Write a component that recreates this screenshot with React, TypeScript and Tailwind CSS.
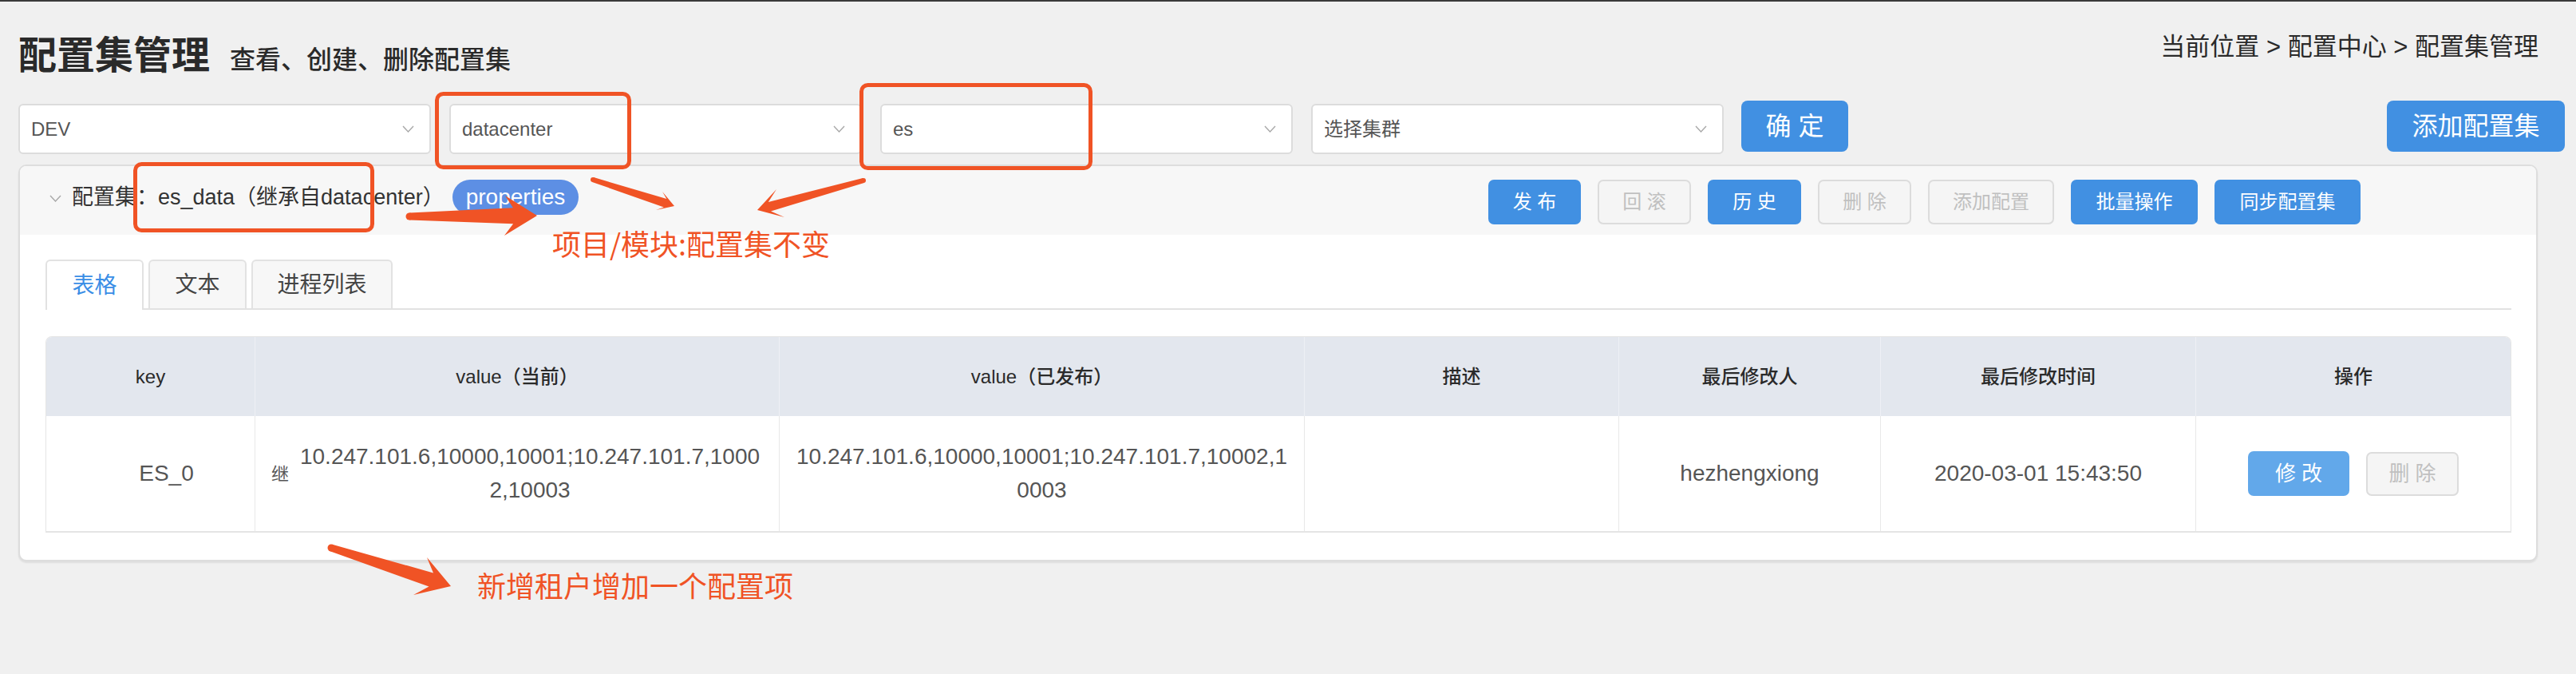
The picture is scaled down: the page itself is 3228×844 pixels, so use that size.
import React from "react";

type P = [number, number];

const RED = "#f05325";

// tapered annotation arrow (tail -> tip) with swept-back barbs
const arrowPoints = (
  tail: P,
  tip: P,
  barbA: P,
  barbB: P,
  tailW: number,
  neckW: number,
  neckBack: number
) => {
  const dx = tip[0] - tail[0];
  const dy = tip[1] - tail[1];
  const len = Math.hypot(dx, dy);
  const d = [dx / len, dy / len];
  let n = [-d[1], d[0]];
  const c = [tip[0] - d[0] * neckBack, tip[1] - d[1] * neckBack];
  if ((barbA[0] - c[0]) * n[0] + (barbA[1] - c[1]) * n[1] < 0) n = [-n[0], -n[1]];
  const pts = [
    [tail[0] + (n[0] * tailW) / 2, tail[1] + (n[1] * tailW) / 2],
    [c[0] + (n[0] * neckW) / 2, c[1] + (n[1] * neckW) / 2],
    barbA,
    tip,
    barbB,
    [c[0] - (n[0] * neckW) / 2, c[1] - (n[1] * neckW) / 2],
    [tail[0] - (n[0] * tailW) / 2, tail[1] - (n[1] * tailW) / 2],
  ];
  return pts.map((p) => p.map((v) => v.toFixed(1)).join(",")).join(" ");
};

const arrows = [
  { tail: [513, 271] as P, tip: [673, 270] as P, a: [633, 245] as P, b: [632, 295] as P, tw: 9, nw: 20, nb: 30 },
  { tail: [743, 225] as P, tip: [845, 258] as P, a: [830, 240] as P, b: [822, 263] as P, tw: 6, nw: 11, nb: 12 },
  { tail: [1082, 226] as P, tip: [949, 263] as P, a: [973, 237] as P, b: [983, 272] as P, tw: 6, nw: 12, nb: 16 },
  { tail: [415, 686] as P, tip: [565, 734] as P, a: [535, 698] as P, b: [518, 745] as P, tw: 9, nw: 18, nb: 26 },
];

const boxes = [
  { x: 547.5, y: 117.5, w: 241, h: 92 },
  { x: 1079.5, y: 106.5, w: 287, h: 104 },
  { x: 169.5, y: 205.5, w: 297, h: 83 },
];

const Chevron = ({ className = "" }: { className?: string }) => (
  <svg width="15" height="9" viewBox="0 0 15 9" className={className}>
    <polyline points="1,1 7.5,8 14,1" fill="none" stroke="#a8a8a8" strokeWidth="1.4" />
  </svg>
);

function Select({ value }: { value: string }) {
  return (
    <div className="mt-[4px] w-[517px] h-[63px] flex-none flex items-center justify-between pl-[14px] pr-[19px] bg-white border-2 border-[#dcdcdc] rounded-[6px]">
      <span className="text-[24px] text-[#555]">{value}</span>
      <Chevron />
    </div>
  );
}

const headerButtons = [
  { label: "发 布", w: "w-[116px]", on: true },
  { label: "回 滚", w: "w-[117px]", on: false },
  { label: "历 史", w: "w-[117px]", on: true },
  { label: "删 除", w: "w-[117px]", on: false },
  { label: "添加配置", w: "w-[158px]", on: false },
  { label: "批量操作", w: "w-[159px]", on: true },
  { label: "同步配置集", w: "w-[183px]", on: true },
];

const columns = ["key", "value（当前）", "value（已发布）", "描述", "最后修改人", "最后修改时间", "操作"];

export default function App() {
  return (
    <div className="relative w-[3228px] h-[844px] overflow-hidden bg-[#f0f0f0] font-['Liberation_Sans','Noto_Sans_CJK_SC',sans-serif] text-[#333]">
      <div className="h-[2px] bg-[#3a3a3a]" />

      {/* title + breadcrumb */}
      <div className="flex justify-between items-start pl-[23px] pr-[47px]">
        <div className="mt-[40px] flex items-baseline text-[#2a2a2a]">
          <h1 className="text-[48px] leading-[56px] font-semibold">配置集管理</h1>
          <span className="ml-[25px] text-[32px] leading-[40px] font-medium">查看、创建、删除配置集</span>
        </div>
        <div className="mt-[37px] text-[31px] leading-[40px] text-[#2a2a2a]">
          当前位置 &gt; 配置中心 &gt; 配置集管理
        </div>
      </div>

      {/* filters */}
      <div className="mt-[28px] flex items-start pl-[23px] pr-[14px] gap-[23px]">
        <Select value="DEV" />
        <Select value="datacenter" />
        <Select value="es" />
        <Select value="选择集群" />
        <button className="-ml-[1px] w-[134px] h-[64px] flex-none rounded-[8px] bg-[#4190e2] text-white text-[32px]">
          确 定
        </button>
        <div className="flex-1" />
        <button className="w-[223px] h-[64px] flex-none rounded-[8px] bg-[#4190e2] text-white text-[32px]">
          添加配置集
        </button>
      </div>

      {/* config set panel */}
      <div className="mt-[13px] ml-[23px] w-[3157px] h-[497px] bg-white border-2 border-[#dddddd] rounded-[10px] overflow-hidden shadow-[0_2px_2px_rgba(0,0,0,0.08)]">
        <div className="h-[86px] bg-[#f7f7f7] flex items-start pl-[37px]">
          <div className="w-[1803px] flex-none flex items-center mt-[17px] h-[44px]">
            <Chevron className="mr-[13px] mt-[2px]" />
            <span className="text-[27px] text-[#333]">配置集：es_data（继承自datacenter）</span>
            <span className="ml-[10px] h-[44px] px-[17px] flex items-center rounded-full bg-[#5d8fe4] text-white text-[28px]">
              properties
            </span>
          </div>
          <div className="mt-[17px] flex gap-[21px]">
            {headerButtons.map((b) => (
              <button
                key={b.label}
                className={`${b.w} h-[56px] rounded-[7px] text-[24px] ${
                  b.on
                    ? "bg-[#4190e2] text-white"
                    : "bg-[#f5f5f5] border-2 border-[#dcdcdc] text-[#c0c0c0]"
                }`}
              >
                {b.label}
              </button>
            ))}
          </div>
        </div>

        <div className="pt-[31px] pl-[32px] pr-[31px]">
          {/* tabs */}
          <div className="flex items-end gap-[6px] border-b-2 border-[#e2e2e2] h-[63px]">
            <div className="-mb-[2px] w-[123px] h-[63px] flex items-center justify-center bg-white border-2 border-b-0 border-[#e2e2e2] rounded-t-[6px] text-[28px] text-[#3a8ee6]">
              表格
            </div>
            <div className="w-[123px] h-[61px] flex items-center justify-center bg-[#f7f7f7] border-2 border-b-0 border-[#e2e2e2] rounded-t-[6px] text-[28px] text-[#444]">
              文本
            </div>
            <div className="w-[177px] h-[61px] flex items-center justify-center bg-[#f7f7f7] border-2 border-b-0 border-[#e2e2e2] rounded-t-[6px] text-[28px] text-[#444]">
              进程列表
            </div>
          </div>

          {/* table */}
          <div className="mt-[33px] border border-b-2 border-[#e5e5e5] rounded-t-[8px] overflow-hidden">
            <div className="grid grid-cols-[261px_657px_658px_394px_328px_395px_395px] h-[99px] bg-[#e3e7ee]">
              {columns.map((c, i) => (
                <div
                  key={c}
                  className={`flex items-center justify-center text-[24px] font-medium text-[#2a2a2a] ${
                    i > 0 ? "border-l border-[#eef0f5]" : ""
                  }`}
                >
                  {c}
                </div>
              ))}
            </div>
            <div className="grid grid-cols-[261px_657px_658px_394px_328px_395px_395px] h-[144px] text-[28px] text-[#555]">
              <div className="flex items-center justify-center pl-[40px]">ES_0</div>
              <div className="border-l border-[#e8e8e8] flex items-center px-[20px] gap-[10px]">
                <span className="text-[22px] text-[#555]">继</span>
                <div className="flex-1 text-center break-all leading-[42px]">
                  10.247.101.6,10000,10001;10.247.101.7,10002,10003
                </div>
              </div>
              <div className="border-l border-[#e8e8e8] flex items-center px-[18px]">
                <div className="w-full text-center break-all leading-[42px]">
                  10.247.101.6,10000,10001;10.247.101.7,10002,10003
                </div>
              </div>
              <div className="border-l border-[#e8e8e8]" />
              <div className="border-l border-[#e8e8e8] flex items-center justify-center">hezhengxiong</div>
              <div className="border-l border-[#e8e8e8] flex items-center justify-center">2020-03-01 15:43:50</div>
              <div className="border-l border-[#e8e8e8] flex items-center justify-center gap-[21px]">
                <button className="w-[127px] h-[56px] rounded-[7px] bg-[#62a8ea] text-white text-[26px]">修 改</button>
                <button className="w-[116px] h-[55px] rounded-[7px] bg-[#f5f5f5] border-2 border-[#dcdcdc] text-[#c0c0c0] text-[26px]">
                  删 除
                </button>
              </div>
            </div>
          </div>
        </div>
      </div>

      {/* annotations */}
      <svg
        className="absolute inset-0 pointer-events-none"
        width="3228"
        height="844"
        viewBox="0 0 3228 844"
      >
        {boxes.map((b, i) => (
          <rect key={i} x={b.x} y={b.y} width={b.w} height={b.h} rx="8" fill="none" stroke={RED} strokeWidth="5" />
        ))}
        {arrows.map((a, i) => (
          <g key={i} fill={RED}>
            <polygon points={arrowPoints(a.tail, a.tip, a.a, a.b, a.tw, a.nw, a.nb)} />
            <circle cx={a.tail[0]} cy={a.tail[1]} r={a.tw / 2} />
          </g>
        ))}
      </svg>
      <div className="absolute left-[692px] top-[284px] text-[36px] leading-[40px] text-[#f05325] font-['Noto_Sans_CJK_SC',sans-serif]">
        项目/模块:配置集不变
      </div>
      <div className="absolute left-[598px] top-[712px] text-[36px] leading-[40px] text-[#f05325] font-['Noto_Sans_CJK_SC',sans-serif]">
        新增租户增加一个配置项
      </div>
    </div>
  );
}
